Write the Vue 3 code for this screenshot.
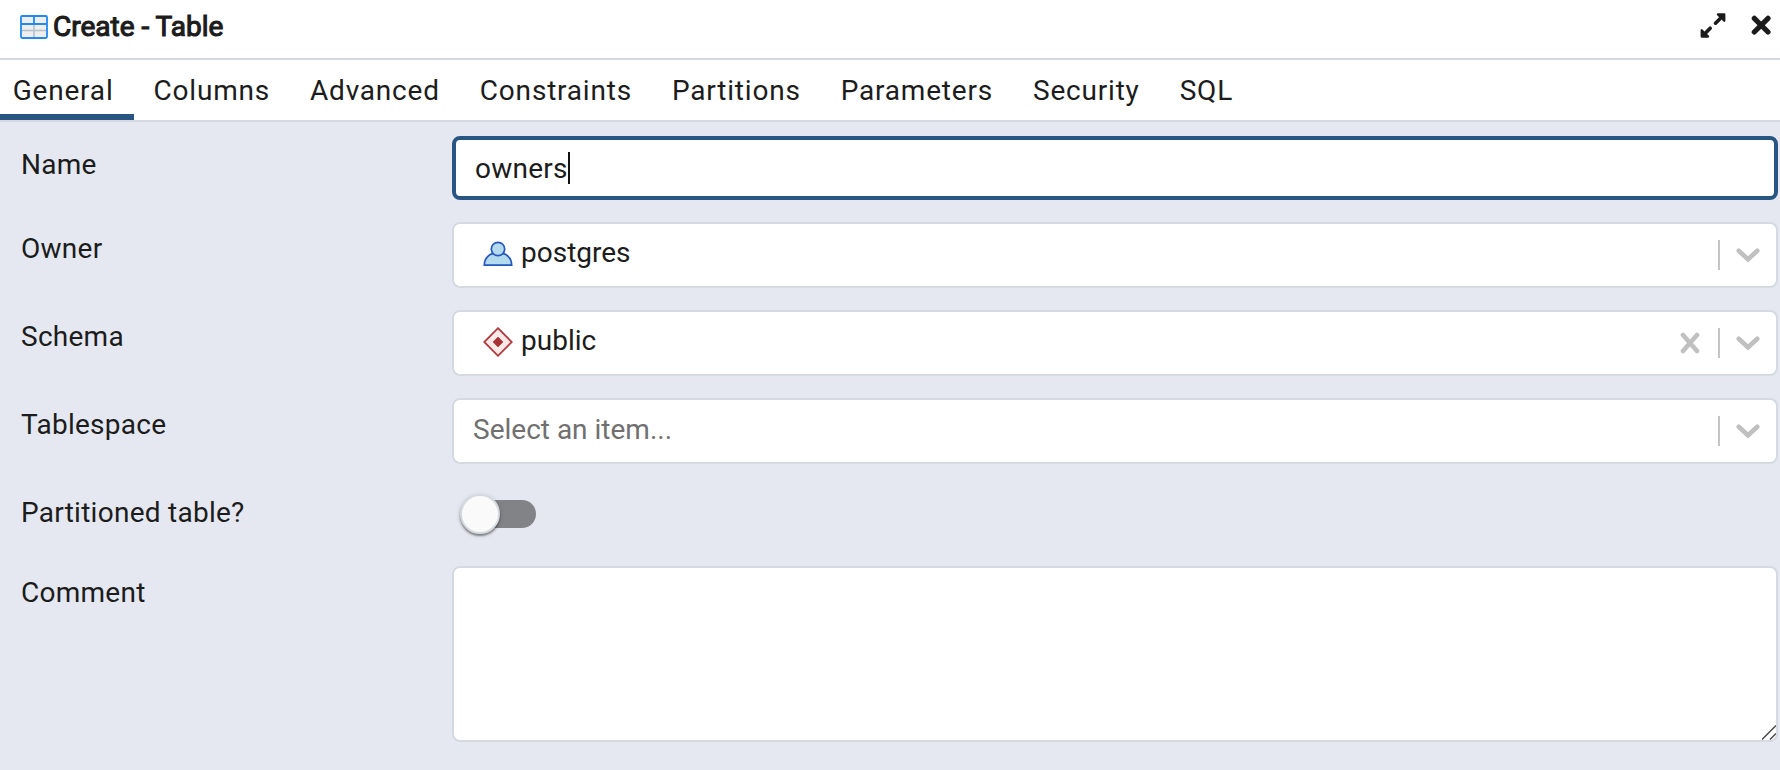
<script setup>
import { ref } from 'vue'

const tabs = ['General', 'Columns', 'Advanced', 'Constraints', 'Partitions', 'Parameters', 'Security', 'SQL']
const active = ref('General')
const selects = [
  { label: 'Owner', value: 'postgres', icon: 'role', clearable: false },
  { label: 'Schema', value: 'public', icon: 'schema', clearable: true },
  { label: 'Tablespace', value: '', icon: '', clearable: false },
]
</script>

<template>
  <div class="dialog">
    <header class="titlebar">
      <svg class="table-icon" width="28" height="24" viewBox="0 0 28 24">
        <rect x="1" y="1" width="26" height="22" rx="1" fill="#eee" />
        <path d="M2 15.5H26M14 9V22" stroke="#b4c0cc" stroke-width="1.6" fill="none" />
        <rect x="1" y="1" width="26" height="22" rx="1.2" fill="none" stroke="#2189f0" stroke-width="1.8" />
        <path d="M1 9H27M14 1V9" stroke="#2189f0" stroke-width="1.8" fill="none" />
      </svg>
      <h1 class="title">Create - Table</h1>
      <svg class="expand" width="26" height="26" viewBox="0 0 26 26">
        <g fill="#1b1b1b" stroke="#1b1b1b" stroke-linejoin="round" stroke-linecap="round">
          <path d="M17.9 1.4H24.3V7.8Z" stroke-width="2.2" />
          <path d="M15.5 10.2L20 5.7" stroke-width="3.6" />
          <path d="M1.7 17.2V23.6H8.1Z" stroke-width="2.2" />
          <path d="M10.2 15.2L6 19.4" stroke-width="3.6" />
        </g>
      </svg>
      <svg class="close" width="20" height="20" viewBox="0 0 20 20">
        <path d="M3.3 3.3L17 17M17 3.3L3.3 17" stroke="#1b1b1b" stroke-width="5.2" stroke-linecap="round" />
      </svg>
    </header>

    <nav class="tabs">
      <button v-for="tab in tabs" :key="tab" class="tab" :class="{ active: tab === active }" @click="active = tab">
        {{ tab }}
      </button>
    </nav>

    <main class="form">
      <div class="row name-row">
        <div class="label">Name</div>
        <div class="field name-field">
          <span class="typed">owners</span><span class="caret"></span>
        </div>
      </div>

      <div v-for="s in selects" :key="s.label" class="row select-row">
        <div class="label">{{ s.label }}</div>
        <div class="field select">
          <svg v-if="s.icon === 'role'" class="value-icon" width="30" height="30" viewBox="0 0 30 30">
            <path d="M1.3 26.2C1.3 18.5 7 13.6 15 13.6S28.7 18.5 28.7 26.2Z" fill="#b4daed" stroke="#2457bd" stroke-width="1.7" />
            <circle cx="15" cy="10" r="6.7" fill="#b4daed" stroke="#2457bd" stroke-width="1.7" />
          </svg>
          <svg v-else-if="s.icon === 'schema'" class="value-icon" width="30" height="30" viewBox="0 0 30 30">
            <path d="M15 1.2L28.8 15L15 28.8L1.2 15Z" fill="#fde8e8" stroke="#b03a3e" stroke-width="1.8" />
            <path d="M15 10L20 15L15 20L10 15Z" fill="#a83236" stroke="#a83236" stroke-width=".6" />
          </svg>
          <span v-if="s.value" class="value">{{ s.value }}</span>
          <span v-else class="placeholder">Select an item...</span>
          <svg v-if="s.clearable" class="clear" width="20" height="22" viewBox="0 0 20 22">
            <path d="M3 3L17 19M17 3L3 19" stroke="#c0c0c0" stroke-width="4.6" stroke-linecap="round" />
          </svg>
          <span class="separator"></span>
          <svg class="chevron" width="24" height="16" viewBox="0 0 24 16">
            <path d="M2.7 3.7L12 12.3L21.3 3.7" fill="none" stroke="#c0c0c0" stroke-width="4.6" stroke-linecap="round" />
          </svg>
        </div>
      </div>

      <div class="row switch-row">
        <div class="label">Partitioned table?</div>
        <div class="switch"><span class="thumb"></span></div>
      </div>

      <div class="row comment-row">
        <div class="label">Comment</div>
        <div class="field comment">
          <svg class="grip" width="14" height="15" viewBox="0 0 14 15">
            <path d="M0 14.5L14 .5M8 14.5L14 8.5" stroke="#fff" stroke-width="3" />
            <path d="M0 14.5L14 .5M8 14.5L14 8.5" stroke="#4a4a4a" stroke-width="1.5" />
          </svg>
        </div>
      </div>
    </main>
  </div>
</template>

<style>
body {
  margin: 0;
  background: #e5e8f0;
}
</style>

<style scoped>
.dialog {
  width: 1780px;
  height: 770px;
  overflow: hidden;
  background: #e5e8f0;
  color: #1c1c1c;
  font: 400 28px/40px Roboto, sans-serif;
}
.dialog * {
  box-sizing: border-box;
}
svg {
  display: block;
  flex: none;
}
.titlebar {
  display: flex;
  align-items: center;
  height: 60px;
  padding: 0 9px 6px 20px;
  background: #fff;
  border-bottom: 2px solid #d5dae1;
}
.table-icon {
  margin-top: 1px;
}
.title {
  flex: 1;
  margin: 2px 0 0 5px;
  font-size: 28px;
  font-weight: 400;
  line-height: 40px;
  -webkit-text-stroke: 1.1px #1c1c1c;
}
.expand {
  margin: 0 25px 1px 0;
}
.close {
  margin-bottom: 2px;
}
.tabs {
  display: flex;
  height: 62px;
  background: #fff;
  border-bottom: 2px solid #d5dae1;
}
.tab {
  height: 60px;
  padding: 8px 20px 0;
  border: 0;
  border-bottom: 6px solid transparent;
  background: none;
  color: inherit;
  font: inherit;
  line-height: 46px;
  letter-spacing: 0.8px;
}
.tab:first-child {
  padding-left: 12.7px;
}
.tab.active {
  border-bottom-color: #285582;
}
.form {
  display: flex;
  flex-direction: column;
  gap: 22px;
  padding: 14px 2px 0 21px;
}
.row {
  display: grid;
  grid-template-columns: 431px 1fr;
}
.label {
  padding-top: 7px;
  letter-spacing: 0.26px;
}
.name-row {
  height: 64px;
}
.name-row .label {
  padding-top: 9px;
}
.select-row {
  height: 66px;
}
.switch-row {
  height: 58px;
}
.comment-row {
  height: 176px;
}
.field {
  display: flex;
  background: #fff;
  border: 2px solid #d5dae1;
  border-radius: 8px;
}
.name-field {
  align-items: center;
  padding-left: 19px;
  border: 4px solid #285582;
}
.typed {
  padding-top: 2px;
  letter-spacing: 0.26px;
}
.caret {
  width: 2px;
  height: 32px;
  background: #111;
}
.select {
  align-items: center;
  padding: 0 16px 0 19px;
}
.value-icon {
  margin: -3px 8px 0 10px;
}
.value,
.placeholder {
  flex: 1;
  padding-bottom: 4px;
}
.placeholder {
  padding-bottom: 2px;
  color: #707070;
}
.clear {
  margin-right: 18px;
}
.separator {
  width: 2px;
  height: 30px;
  margin-right: 16px;
  background: #c4c4c4;
}
.switch {
  width: 68px;
  height: 28px;
  margin: 14px 0 0 16px;
  border-radius: 14px;
  background: #828386;
}
.thumb {
  display: block;
  width: 40px;
  height: 40px;
  margin: -6px 0 0 -8px;
  border: 2px solid #d5dae1;
  border-radius: 50%;
  background: #fafafa;
  box-shadow: 0 2px 2px rgba(0, 0, 0, 0.4), 0 1px 5px rgba(0, 0, 0, 0.15);
}
.comment {
  align-items: flex-end;
  justify-content: flex-end;
}
</style>
